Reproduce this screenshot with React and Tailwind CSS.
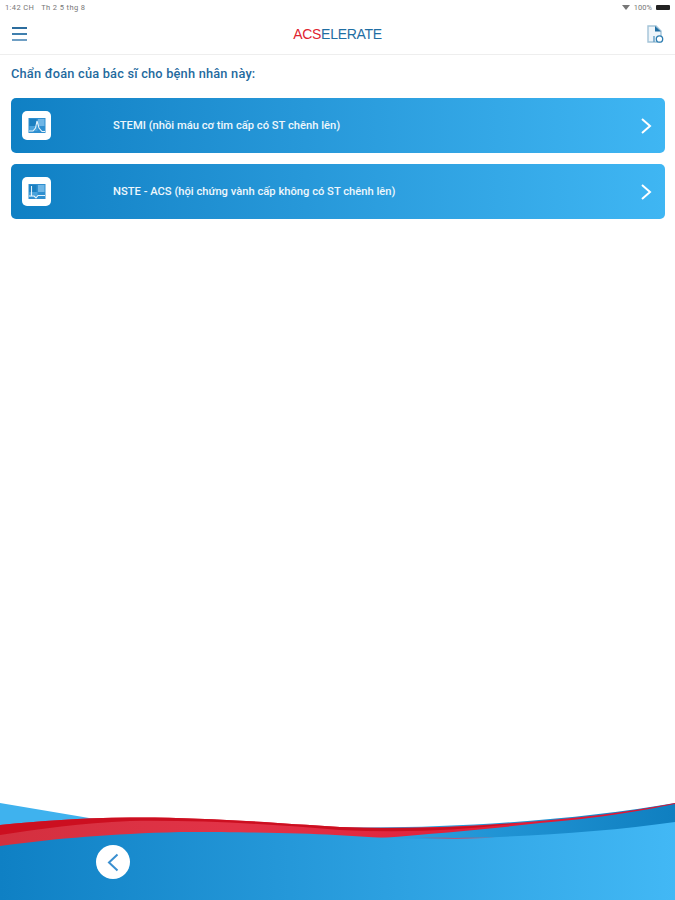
const Wave = () => (
  <svg className="absolute inset-0 w-full h-full" viewBox="0 0 675 100" preserveAspectRatio="none">
    <defs>
      <linearGradient id="bg" gradientUnits="userSpaceOnUse" x1="0" x2="675" y1="0" y2="0">
        <stop offset="0" stopColor="#0f80c4" />
        <stop offset="1" stopColor="#42b8f5" />
      </linearGradient>
      <linearGradient id="strip" gradientUnits="userSpaceOnUse" x1="400" x2="675" y1="0" y2="0">
        <stop offset="0" stopColor="#2a9fdf" />
        <stop offset="1" stopColor="#0f7fc0" />
      </linearGradient>
      <linearGradient id="red" gradientUnits="userSpaceOnUse" x1="0" x2="675" y1="0" y2="0">
        <stop offset="0" stopColor="#d3303f" />
        <stop offset="0.35" stopColor="#e23347" />
        <stop offset="1" stopColor="#e01030" />
      </linearGradient>
    </defs>
    {/* light blue wedge on the left, dark strip on the right */}
    <path d="M0 3 L95 19 L0 28 Z" fill="#3fb2ee" />
    <path d="M330 27 C440 30 580 20 675 3 V30 L400 46 L330 40 Z" fill="url(#strip)" />
    {/* red ribbon, runs a little under the main shape so no white shows between them */}
    <path d="M0 25 C40 21 80 18 130 17.5 C200 17 260 22 340 27 C420 30 510 25 600 15 C630 11 655 7 675 3 L675 4 C640 11 600 18 540 23 C490 29 440 33 380 38 L340 40 L180 36 L0 50 Z" fill="url(#red)" />
    <path d="M0 25 C40 21 80 18 130 17.5 C200 17 260 22 340 27 C400 29 450 28 520 23 C460 31 400 33 340 30 C270 24 200 20 130 21 C80 23 40 29 0 35 Z" fill="#cc0f20" />
    <path d="M0 46 C60 38 110 34 180 32 C250 32 300 33 335 35 C370 37 400 39 430 39 C500 38 600 33 675 22 V100 H0 Z" fill="url(#bg)" />
    <path d="M418 37.5 C440 38 470 38 495 37.5 C470 39 440 39 418 37.5 Z" fill="#e0405a" />
  </svg>
)

const DiagnosisIcon = ({ variant }) => (
  <svg width="18" height="18" viewBox="0 0 18 18" fill="none">
    <rect x="0.5" y="1" width="17" height="15" fill="#2f8fd0" />
    <rect x="1.5" y="2" width="7" height="7" fill="#1b7fc0" />
    <rect x="10" y="2" width="6.5" height="7" fill="#6fb6e6" />
    <rect x="1.5" y="9" width="8" height="5" fill="#4aa3dc" />
    {variant === 'stemi' ? (
      <path d="M1 14 H5 L7.5 11 L9 4 L11 11 L14 14.5 H17" stroke="#e6f3fb" strokeWidth="1.1" />
    ) : (
      <path d="M1 13 H6 L8 15 L10 12.5 H17 M3.5 3 V13" stroke="#e6f3fb" strokeWidth="1.1" />
    )}
  </svg>
)

const rows = [
  { id: 'stemi', label: 'STEMI (nhồi máu cơ tim cấp có ST chênh lên)' },
  { id: 'nste', label: 'NSTE - ACS (hội chứng vành cấp không có ST chênh lên)' },
]

const App = () => {
  return (
    <div className="relative flex flex-col w-[675px] h-[900px] bg-white overflow-hidden font-['Roboto',sans-serif]">
      <div className="flex items-center justify-between h-[13px] mt-px pl-[5px] pr-[5px] text-[7.5px] text-[#777]">
        <span className="tracking-[0.4px]">1:42 CH&nbsp;&nbsp;&nbsp;Th 2 5 thg 8</span>
        <div className="flex items-center gap-[4px]">
          <svg width="8" height="5" viewBox="0 0 8 5"><path d="M0 0 H8 L4 5 Z" fill="#777" /></svg>
          <span>100%</span>
          <span className="w-[14px] h-[5px] bg-[#222] rounded-[1px]" />
        </div>
      </div>

      <div className="grid grid-cols-[1fr_auto_1fr] items-center h-[41px] px-3 border-b border-[#eeeeee]">
        <svg width="15" height="14" viewBox="0 0 15 14" fill="none" strokeWidth="2">
          <path d="M0 1 H15" stroke="#2c6d9e" />
          <path d="M0 7 H15" stroke="#3f7fae" />
          <path d="M0 13 H15" stroke="#6f9fc4" />
        </svg>
        <div className="text-[14px] tracking-[-0.3px] font-['Liberation_Sans',sans-serif]">
          <span className="text-[#e0232e]">ACS</span>
          <span className="text-[#1f6ea3]">ELERATE</span>
        </div>
        <div className="justify-self-end -mr-[2px]">
          <svg width="19" height="19" viewBox="0 0 19 19" fill="none">
            <path d="M2 1 H10 L15 6 V17 H2 Z" stroke="#a3c3d8" strokeWidth="1.4" fill="#eef5fa" />
            <path d="M9 1 L15 6.5 H9 Z" fill="#1f6ea3" />
            <circle cx="13.5" cy="14" r="3.2" stroke="#2c7cb0" strokeWidth="1.3" fill="#fff" />
            <path d="M8 11 V17" stroke="#5f9cc4" strokeWidth="1.4" />
          </svg>
        </div>
      </div>

      <p className="mt-[10px] pl-[11px] text-[12.8px] leading-[18px] font-medium text-[#1f6a9e] tracking-[0.2px]">
        Chẩn đoán của bác sĩ cho bệnh nhân này:
      </p>

      <div className="flex flex-col gap-[11px] mt-[15px] ml-[11px] mr-[10px]">
        {rows.map((row) => (
          <div
            key={row.id}
            className="flex items-center h-[55px] pl-[11px] pr-[13px] rounded-[5px] bg-gradient-to-r from-[#0f80c4] to-[#3fb6f3]"
          >
            <div className="flex items-center justify-center w-[29px] h-[29px] rounded-[5px] bg-white">
              <DiagnosisIcon variant={row.id} />
            </div>
            <span className="ml-[62px] pt-[2px] text-[11.2px] font-medium text-[#eef7fc]">{row.label}</span>
            <svg className="ml-auto" width="12" height="18" viewBox="0 0 12 18" fill="none" stroke="#fff" strokeWidth="2">
              <path d="M2 2 L10 9 L2 16" />
            </svg>
          </div>
        ))}
      </div>

      <div className="relative mt-auto h-[100px]">
        <Wave />
        <button className="absolute left-[96px] top-[45px] flex items-center justify-center w-[34px] h-[34px] rounded-full bg-white">
          <svg width="12" height="19" viewBox="0 0 12 19" fill="none" stroke="#3a8fd0" strokeWidth="2">
            <path d="M10.5 1.5 L2 9.5 L10.5 17.5" />
          </svg>
        </button>
      </div>
    </div>
  )
}

export default App
